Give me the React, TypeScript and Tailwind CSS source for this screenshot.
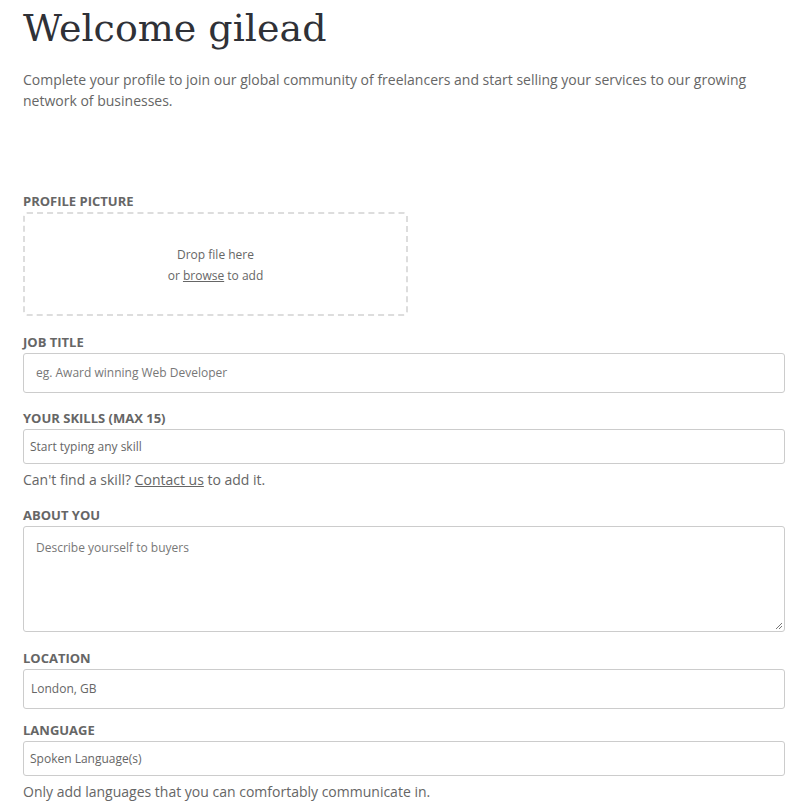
import React from "react";

const label = "block text-[13px] font-bold uppercase leading-[16px] text-[#666] mb-[3px]";
const font = { fontFamily: '"Open Sans", sans-serif' };

export default function App() {
  return (
    <div className="bg-white min-h-[807px] w-[809px] px-[23px]" style={font}>
      <h1
        className="text-[38px] leading-[52px] text-[#2f3137] pt-[2px] m-0"
        style={{ fontFamily: '"DejaVu Serif", serif' }}
      >
        Welcome gilead
      </h1>
      <p className="mt-[15px] text-[14px] leading-[21px] text-[#666] w-[762px]">
        Complete your profile to join our global community of freelancers and start selling your services to our growing network of businesses.
      </p>

      <div className="mt-[82px] w-[762px]">
        <label className={label}>Profile picture</label>
        <div className="w-[385px] h-[104px] border-2 border-dashed border-[#ddd] rounded-[4px] flex flex-col items-center justify-center text-[12px] leading-[21px] text-[#666]">
          <div className="mt-[2px]">Drop file here</div>
          <div>
            or <span className="underline">browse</span> to add
          </div>
        </div>

        <label className={label + " mt-[18px]"}>Job title</label>
        <div className="h-[40px] border border-[#ccc] rounded-[3px] flex items-center px-[12px] text-[12px] text-[#777]">
          eg. Award winning Web Developer
        </div>

        <label className={label + " mt-[17px]"}>Your skills (max 15)</label>
        <div className="h-[35px] border border-[#ccc] rounded-[3px] flex items-center px-[6px] text-[12px] text-[#666]">
          Start typing any skill
        </div>
        <p className="mt-[6px] text-[14px] leading-[20px] text-[#666]">
          Can't find a skill? <span className="underline">Contact us</span> to add it.
        </p>

        <label className={label + " mt-[17px]"}>About you</label>
        <div className="relative h-[106px] border border-[#ccc] rounded-[3px] px-[12px] pt-[12px] text-[12px] leading-[18px] text-[#777]">
          Describe yourself to buyers
          <svg className="absolute right-[1px] bottom-[1px]" width="9" height="9" viewBox="0 0 9 9">
            <path d="M8 2 L2 8 M8 5 L5 8" stroke="#777" strokeWidth="1" />
          </svg>
        </div>

        <label className={label + " mt-[18px]"}>Location</label>
        <div className="h-[40px] border border-[#ccc] rounded-[3px] flex items-center px-[7px] text-[12px] text-[#666]">
          London, GB
        </div>

        <label className={label + " mt-[13px]"}>Language</label>
        <div className="h-[35px] border border-[#ccc] rounded-[3px] flex items-center px-[6px] text-[12px] text-[#666]">
          Spoken Language(s)
        </div>
        <p className="mt-[6px] text-[14px] leading-[20px] text-[#666]">
          Only add languages that you can comfortably communicate in.
        </p>
      </div>
    </div>
  );
}
